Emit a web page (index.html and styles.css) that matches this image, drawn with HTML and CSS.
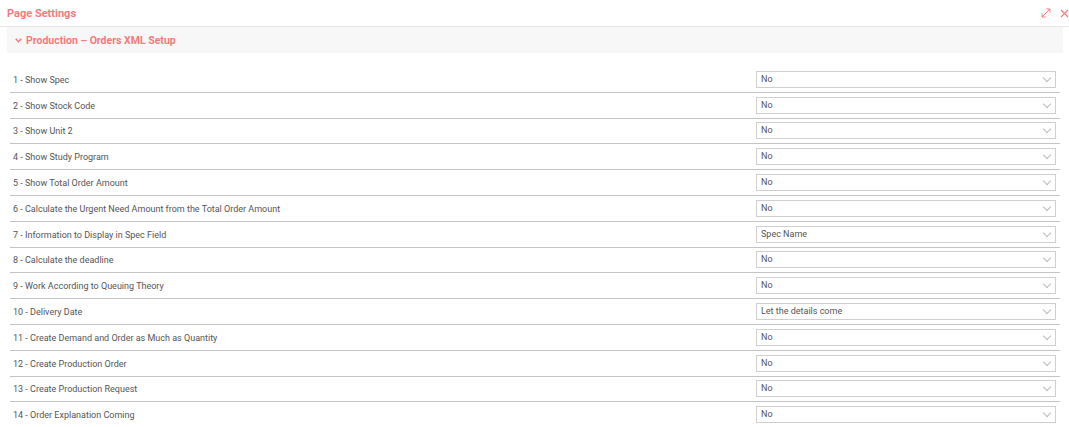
FILE: index.html
```html
<!DOCTYPE html>
<html lang="en">
<head>
  <meta charset="UTF-8" />
  <title>Page Settings</title>
  <link rel="stylesheet" href="styles.css">
</head>
<body>

  <div class="panel-head">
    <h1>Page Settings</h1>
    <div class="head-tools">
      <svg width="10" height="10" viewBox="0 0 10 10" fill="none" stroke="currentColor" stroke-width="1">
        <path d="M1 9 L9 1 M5.5 1 H9 V4.5 M1 5.5 V9 H4.5" />
      </svg>
      <svg width="9" height="9" viewBox="0 0 9 9" fill="none" stroke="currentColor" stroke-width="1.1">
        <path d="M1 1 L8 8 M8 1 L1 8" />
      </svg>
    </div>
  </div>

  <div class="section">
    <div class="section-title">
      <svg width="7" height="5" viewBox="0 0 7 5" fill="none" stroke="currentColor" stroke-width="1.4">
        <path d="M0.7 0.8 L3.5 3.8 L6.3 0.8" />
      </svg>
      Production – Orders XML Setup
    </div>

    <div class="rows">
      <div class="row"><span class="label">1 - Show Spec</span><div class="select">No</div></div>
      <div class="row"><span class="label">2 - Show Stock Code</span><div class="select">No</div></div>
      <div class="row"><span class="label">3 - Show Unit 2</span><div class="select">No</div></div>
      <div class="row"><span class="label">4 - Show Study Program</span><div class="select">No</div></div>
      <div class="row"><span class="label">5 - Show Total Order Amount</span><div class="select">No</div></div>
      <div class="row"><span class="label">6 - Calculate the Urgent Need Amount from the Total Order Amount</span><div class="select">No</div></div>
      <div class="row"><span class="label">7 - Information to Display in Spec Field</span><div class="select">Spec Name</div></div>
      <div class="row"><span class="label">8 - Calculate the deadline</span><div class="select">No</div></div>
      <div class="row"><span class="label">9 - Work According to Queuing Theory</span><div class="select">No</div></div>
      <div class="row"><span class="label">10 - Delivery Date</span><div class="select">Let the details come</div></div>
      <div class="row"><span class="label">11 - Create Demand and Order as Much as Quantity</span><div class="select">No</div></div>
      <div class="row"><span class="label">12 - Create Production Order</span><div class="select">No</div></div>
      <div class="row"><span class="label">13 - Create Production Request</span><div class="select">No</div></div>
      <div class="row"><span class="label">14 - Order Explanation Coming</span><div class="select">No</div></div>
    </div>
  </div>

</body>
</html>
```

FILE: styles.css
```css
body {
  margin: 0;
  background: #fff;
  font-family: Roboto, "Liberation Sans", Arial, sans-serif;
  color: #555;
}

/* Naglowek panelu */
.panel-head {
  display: flex;
  align-items: center;
  justify-content: space-between;
  height: 26px;
  padding: 0 0 0 7px;
  border-bottom: 1px solid #e6e6e6;
}

h1 {
  margin: 0;
  font-size: 11px;
  font-weight: bold;
  color: #f27b7d;
}

.head-tools {
  display: flex;
  align-items: center;
  gap: 9px;
  color: #f27b7d;
}

.section {
  padding: 0 6px 0 7px;
}

.section-title {
  display: flex;
  align-items: center;
  gap: 4px;
  height: 26px;
  padding-left: 8px;
  background: #f7f7f7;
  font-size: 10.5px;
  font-weight: bold;
  color: #f27b7d;
}

.rows {
  margin-top: 14px;
  padding: 0 3px;
}

.row {
  display: flex;
  align-items: center;
  justify-content: space-between;
  height: 24.8px;
  border-bottom: 1px solid #c4c4c4;
}

.row:last-child {
  border-bottom: none;
}

.label {
  padding: 1px 0 0 3px;
  font-size: 9px;
  color: #555;
}

.select {
  position: relative;
  width: 294px;
  height: 15px;
  margin-right: 4px;
  padding-left: 4px;
  border: 1px solid #cfcfcf;
  font-size: 9px;
  line-height: 15px;
  color: #555;
  box-sizing: content-box;
}

/* strzalka selecta */
.select::after {
  content: "";
  position: absolute;
  right: 5px;
  top: 3px;
  width: 5px;
  height: 5px;
  border-right: 1px solid #bbb;
  border-bottom: 1px solid #bbb;
  transform: rotate(45deg);
}
```
